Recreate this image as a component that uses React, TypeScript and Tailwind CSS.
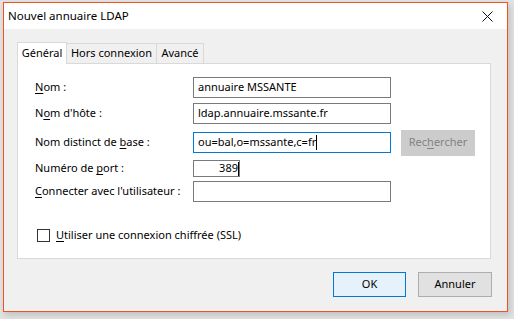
import React from 'react';

const font = { fontFamily: '"Noto Sans", "Liberation Sans", sans-serif' };

function U({ children }: { children: React.ReactNode }) {
  return <span className="underline underline-offset-2">{children}</span>;
}

function Row({ label, children, h = 'h-[21px]', mt }: { label: React.ReactNode; children: React.ReactNode; h?: string; mt: string }) {
  return (
    <div className={`flex items-center ${h} ${mt}`}>
      <div className="w-[158px] shrink-0 whitespace-nowrap">{label}</div>
      {children}
    </div>
  );
}

export default function App() {
  return (
    <div className="w-[514px] h-[319px] bg-[#e2e2e2] pl-[3px] pt-[2px] overflow-hidden text-[11px] text-black whitespace-nowrap" style={font}>
      <div className="w-[505px] h-[310px] border border-[#f0531f] bg-[#f0f0f0] flex flex-col shadow-[2px_3px_6px_rgba(0,0,0,0.15)]">
        {/* Barre de titre */}
        <div className="h-[26px] bg-white flex items-center justify-between pl-[4px] pr-[14px] shrink-0">
          <span className="text-[11.5px] leading-none">Nouvel annuaire LDAP</span>
          <svg width="11" height="11" viewBox="0 0 11 11">
            <path d="M0.5 0.5 L10.5 10.5 M10.5 0.5 L0.5 10.5" stroke="#111" strokeWidth="1" />
          </svg>
        </div>

        <div className="pl-[13px] pt-[12px] flex flex-col">
          {/* Onglets */}
          <div className="flex items-end h-[22px]">
            <div className="w-[50px] h-[22px] bg-white border border-b-0 border-[#d9d9d9] flex items-center justify-center relative z-10 -mb-px pb-px">Général</div>
            <div className="w-[90px] h-[20px] border border-l-0 border-b-0 border-[#d9d9d9] flex items-center justify-center">Hors connexion</div>
            <div className="w-[47px] h-[20px] border border-l-0 border-b-0 border-[#d9d9d9] flex items-center justify-center">Avancé</div>
          </div>

          {/* Panneau */}
          <div className="w-[474px] h-[196px] bg-white border border-[#d9d9d9] pl-[17px] pt-[13px] flex flex-col">
            <Row label={<><U>N</U>om :</>} mt="mt-0">
              <div className="w-[198px] h-[21px] border border-[#7a7a7a] flex items-center px-[4px]">annuaire MSSANTE</div>
            </Row>
            <Row label={<>N<U>o</U>m d'hôte :</>} mt="mt-[5px]">
              <div className="w-[198px] h-[21px] border border-[#7a7a7a] flex items-center px-[4px]">ldap.annuaire.mssante.fr</div>
            </Row>
            <Row label={<>Nom distinct de <U>b</U>ase :</>} mt="mt-[8px]">
              <div className="w-[198px] h-[21px] border border-[#0078d7] flex items-center px-[4px]">
                ou=bal,o=mssante,c=fr<span className="inline-block w-px h-[15px] bg-black" />
              </div>
              <div className="ml-[10px] w-[74px] h-[26px] bg-[#cccccc] border border-[#cccccc] text-[#838383] flex items-center justify-center">
                Rec<U>h</U>ercher
              </div>
            </Row>
            <Row label={<>Numéro de <U>p</U>ort :</>} h="h-[17px]" mt="mt-[7px]">
              <div className="w-[47px] h-[17px] border border-[#7a7a7a] flex items-center justify-end">
                389<span className="inline-block w-px h-[14px] bg-black" />
              </div>
            </Row>
            <Row label={<><U>C</U>onnecter avec l'utilisateur :</>} mt="mt-[4px]">
              <div className="w-[198px] h-[21px] border border-[#7a7a7a]" />
            </Row>

            <div className="flex items-center mt-[27px] pl-[2px] h-[13px]">
              <div className="w-[13px] h-[13px] border border-[#333] bg-white" />
              <span className="ml-[6px]"><U>U</U>tiliser une connexion chiffrée (SSL)</span>
            </div>
          </div>

          {/* Boutons */}
          <div className="flex justify-end gap-[12px] mt-[13px] w-[475px]">
            <div className="w-[73px] h-[25px] bg-[#e5f1fb] border border-[#0078d7] flex items-center justify-center">OK</div>
            <div className="w-[74px] h-[25px] bg-[#e1e1e1] border border-[#adadad] flex items-center justify-center">Annuler</div>
          </div>
        </div>
      </div>
    </div>
  );
}
